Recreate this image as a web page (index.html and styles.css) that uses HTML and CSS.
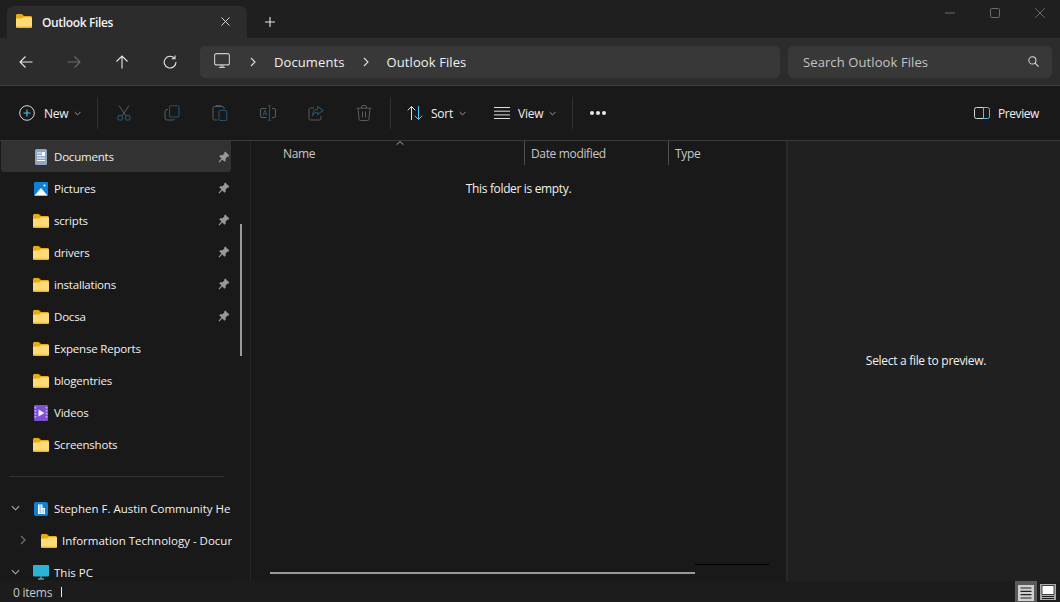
FILE: index.html
```html
<!DOCTYPE html>
<html lang="en">
<head>
<meta charset="utf-8">
<title>Outlook Files</title>
<link rel="stylesheet" href="styles.css">
</head>
<body>
<svg class="defs" width="0" height="0" aria-hidden="true">
  <defs>
    <symbol id="folder" viewBox="0 0 16 14">
      <path d="M0 1.5C0 .7.6 0 1.4 0h3.800c.5 0 .8.2 1.100.5L8 2h6.600c.8 0 1.400.7 1.400 1.500V5H0z" fill="#eba90f"/>
      <path d="M0 4.600h5.600L8 3.200h6.600c.8 0 1.400.6 1.400 1.400v8c0 .8-.6 1.400-1.400 1.400H1.400C.6 14 0 13.400 0 12.600z" fill="#ffdc78"/>
      <path d="M0 12.600h16c0 .8-.6 1.400-1.400 1.400H1.400C.6 14 0 13.400 0 12.600z" fill="#eeb533"/>
    </symbol>
    <symbol id="pin" viewBox="0 0 12 12">
      <path d="M7.300.6l4.100 4.100-1.100 1.100-.8-.2-1.900 1.900.1 2.100-1.100 1.100-2.300-2.300L1.300 11.500l-.8-.8 3-3.100L1.200 5.300l1.100-1.100 2.100.1L6.300 2.400l-.2-.7z" fill="#999"/>
    </symbol>
    <symbol id="chev" viewBox="0 0 10 6">
      <path d="M1 1l4 4 4-4" fill="none" stroke="currentColor" stroke-width="1.200"/>
    </symbol>
  </defs>
</svg>
<div class="window">
  <header class="titlebar">
    <div class="tab">
      <svg class="tab-folder"><use href="#folder"/></svg>
      <span class="tab-title">Outlook Files</span>
      <svg class="tab-close" viewBox="0 0 10 10"><path d="M.5.5l9 9M9.500.5l-9 9" stroke="#d8d8d8" stroke-width="1.100" fill="none"/></svg>
    </div>
    <svg class="tab-add" viewBox="0 0 10 10"><path d="M5 0v10M0 5h10" stroke="#e6e6e6" stroke-width="1.100" fill="none"/></svg>
    <div class="caption">
      <svg class="cap" viewBox="0 0 10 10"><path d="M0 5h10" stroke="#6b6b6b" fill="none"/></svg>
      <svg class="cap" viewBox="0 0 10 10"><rect x=".5" y=".5" width="9" height="9" rx="1" stroke="#6b6b6b" fill="none"/></svg>
      <svg class="cap" viewBox="0 0 10 10"><path d="M.3.3l9.400 9.400M9.700.3L.3 9.700" stroke="#6b6b6b" fill="none"/></svg>
    </div>
  </header>

  <nav class="navbar">
    <div class="nav-buttons">
      <svg class="nav-ico" viewBox="0 0 14 14"><path d="M13.500 7H1M6.500 1.500L1 7l5.500 5.500" stroke="#e8e8e8" stroke-width="1.100" fill="none"/></svg>
      <svg class="nav-ico" viewBox="0 0 14 14"><path d="M.5 7H13M7.500 1.500L13 7l-5.500 5.500" stroke="#6a6a6a" stroke-width="1.100" fill="none"/></svg>
      <svg class="nav-ico" viewBox="0 0 14 14"><path d="M7 13.500V1M1.500 6.500L7 1l5.500 5.500" stroke="#e8e8e8" stroke-width="1.100" fill="none"/></svg>
      <svg class="nav-ico" viewBox="0 0 14 14"><path d="M11.600 3.300A5.900 5.900 0 1 0 13 7" stroke="#e8e8e8" stroke-width="1.100" fill="none"/><path d="M12 .5v3.300H8.700" stroke="#e8e8e8" stroke-width="1.100" fill="none"/></svg>
    </div>
    <div class="address">
      <svg class="pc-ico" viewBox="0 0 16 16"><rect x=".6" y=".6" width="14.800" height="11.300" rx="2" stroke="#c9c9c9" stroke-width="1.100" fill="none"/><path d="M5 14.500h6M7 12v2M9 12v2" stroke="#c9c9c9" stroke-width="1.100" fill="none"/></svg>
      <svg class="crumb-sep" viewBox="0 0 6 10"><path d="M1 1l4 4-4 4" stroke="#dcdcdc" stroke-width="1.100" fill="none"/></svg>
      <span class="crumb">Documents</span>
      <svg class="crumb-sep" viewBox="0 0 6 10"><path d="M1 1l4 4-4 4" stroke="#dcdcdc" stroke-width="1.100" fill="none"/></svg>
      <span class="crumb">Outlook Files</span>
    </div>
    <div class="search">
      <span class="search-text">Search Outlook Files</span>
      <svg class="search-ico" viewBox="0 0 12 12"><circle cx="4.800" cy="4.800" r="3.900" stroke="#d8d8d8" stroke-width="1.100" fill="none"/><path d="M7.700 7.700l3.800 3.800" stroke="#d8d8d8" stroke-width="1.200" fill="none"/></svg>
    </div>
  </nav>

  <div class="toolbar">
    <div class="tool tool-new">
      <svg class="tool-ico" viewBox="0 0 16 16"><circle cx="8" cy="8" r="7.300" stroke="#d6d6d6" stroke-width="1" fill="none"/><path d="M8 4.500v7M4.500 8h7" stroke="#4cc2ff" stroke-width="1.100" fill="none"/></svg>
      <span class="tool-label">New</span>
      <svg class="tool-chev"><use href="#chev"/></svg>
    </div>
    <span class="tool-div tool-div-first"></span>
    <div class="tool-icons">
      <div class="icon-btn"><svg class="tool-ico" viewBox="0 0 16 16"><path d="M3 .5l6.600 10M13 .5L6.400 10.500" stroke="#5c5c5c" fill="none"/><circle cx="4.200" cy="12.800" r="2.400" stroke="#25506c" stroke-width="1.100" fill="none"/><circle cx="11.800" cy="12.800" r="2.400" stroke="#25506c" stroke-width="1.100" fill="none"/></svg></div>
      <div class="icon-btn"><svg class="tool-ico" viewBox="0 0 16 16"><path d="M4 4.500H3A2 2 0 0 0 1 6.500v6.500a2 2 0 0 0 2 2h6a2 2 0 0 0 1.800-1.200" stroke="#5c5c5c" fill="none"/><rect x="5.500" y=".8" width="9.500" height="11.200" rx="2" stroke="#25506c" stroke-width="1.100" fill="none"/></svg></div>
      <div class="icon-btn"><svg class="tool-ico" viewBox="0 0 16 16"><path d="M5.500 15H2.500a1.500 1.500 0 0 1-1.500-1.500V3a1.500 1.500 0 0 1 1.500-1.500h8A1.500 1.500 0 0 1 12 3v1.500M4 1.500V.7h5v.8" stroke="#5c5c5c" fill="none"/><rect x="7" y="5.500" width="7.800" height="10" rx="1.500" stroke="#25506c" stroke-width="1.100" fill="none"/></svg></div>
      <div class="icon-btn"><svg class="tool-ico" viewBox="0 0 16 16"><path d="M6.500 3.500H2A1.500 1.500 0 0 0 .5 5v6A1.500 1.500 0 0 0 2 12.500h4.500M12 3.500h2A1.500 1.500 0 0 1 15.500 5v6A1.500 1.500 0 0 1 14 12.500h-2" stroke="#5c5c5c" fill="none"/><path d="M3 10.500l2-5.500 2 5.500M3.700 8.800h2.600" stroke="#25506c" fill="none"/><path d="M9.500 1v14M7.800.8h3.400M7.800 15.200h3.400" stroke="#25506c" stroke-width="1.100" fill="none"/></svg></div>
      <div class="icon-btn"><svg class="tool-ico" viewBox="0 0 16 16"><path d="M6 3H2.500A1.500 1.500 0 0 0 1 4.500v9A1.500 1.500 0 0 0 2.500 15h9a1.500 1.500 0 0 0 1.500-1.500V11" stroke="#5c5c5c" fill="none"/><path d="M9.500 1.500l5.500 4-5.500 4.200V7.300C7 7.300 5.500 8.500 4.500 11c0-4 2-6.600 5-6.800z" stroke="#25506c" stroke-width="1.100" fill="none"/></svg></div>
      <div class="icon-btn"><svg class="tool-ico" viewBox="0 0 16 16"><path d="M.5 3.200h15M5.500 3V2a1.500 1.500 0 0 1 1.500-1.500h2A1.500 1.500 0 0 1 10.500 2v1M2 3.200l1 10.800a1.500 1.500 0 0 0 1.500 1.500h7a1.500 1.500 0 0 0 1.500-1.500l1-10.800M6.500 6.500v6M9.500 6.500v6" stroke="#5c5c5c" fill="none"/></svg></div>
    </div>
    <span class="tool-div"></span>
    <div class="tool tool-sort">
      <svg class="tool-ico sort-ico" viewBox="0 0 16 16"><path d="M4.500 15V1.500M.7 5.300L4.500 1.500l3.800 3.800" stroke="#e0e0e0" fill="none"/><path d="M11.500 1v13.500M7.700 10.700l3.800 3.800 3.800-3.800" stroke="#4cc2ff" fill="none"/></svg>
      <span class="tool-label">Sort</span>
      <svg class="tool-chev"><use href="#chev"/></svg>
    </div>
    <div class="tool tool-view">
      <svg class="tool-ico" viewBox="0 0 16 16"><path d="M0 2.500h16M0 6.200h16M0 9.900h16M0 13.500h16" stroke="#e0e0e0" fill="none"/></svg>
      <span class="tool-label">View</span>
      <svg class="tool-chev"><use href="#chev"/></svg>
    </div>
    <span class="tool-div"></span>
    <div class="dots"><i></i><i></i><i></i></div>
    <div class="tool tool-preview">
      <svg class="tool-ico" viewBox="0 0 16 12"><path d="M9.500.5H2.500a2 2 0 0 0-2 2v7a2 2 0 0 0 2 2h7" stroke="#d8d8d8" fill="none"/><path d="M9.500.5h4a2 2 0 0 1 2 2v7a2 2 0 0 1-2 2h-4z" stroke="#4cc2ff" fill="none"/></svg>
      <span class="tool-label">Preview</span>
    </div>
  </div>

  <main class="body">
    <aside class="sidebar">
      <ul class="tree">
        <li class="row row-active">
          <svg class="ico doc" viewBox="0 0 12 16"><rect width="12" height="16" rx="1.500" fill="#8fa6c2"/><path d="M2 4h4.500M2 6.500h4.500M2 9h8M2 11.500h8" stroke="#fff" stroke-width="1.200"/><rect x="7" y="3" width="3" height="4" fill="#fff"/></svg>
          <span class="label">Documents</span><svg class="pin"><use href="#pin"/></svg>
        </li>
        <li class="row">
          <svg class="ico" viewBox="0 0 16 14"><rect width="14" height="14" x="1" rx="1" fill="#0f80d7"/><path d="M1.500 13.500L8 6l6.500 7.500z" fill="#fff"/><circle cx="11.500" cy="3.500" r="1.100" fill="#fff"/></svg>
          <span class="label">Pictures</span><svg class="pin"><use href="#pin"/></svg>
        </li>
        <li class="row"><svg class="ico"><use href="#folder"/></svg><span class="label">scripts</span><svg class="pin"><use href="#pin"/></svg></li>
        <li class="row"><svg class="ico"><use href="#folder"/></svg><span class="label">drivers</span><svg class="pin"><use href="#pin"/></svg></li>
        <li class="row"><svg class="ico"><use href="#folder"/></svg><span class="label">installations</span><svg class="pin"><use href="#pin"/></svg></li>
        <li class="row"><svg class="ico"><use href="#folder"/></svg><span class="label">Docsa</span><svg class="pin"><use href="#pin"/></svg></li>
        <li class="row"><svg class="ico"><use href="#folder"/></svg><span class="label">Expense Reports</span></li>
        <li class="row"><svg class="ico"><use href="#folder"/></svg><span class="label">blogentries</span></li>
        <li class="row">
          <svg class="ico ico-tall" viewBox="0 0 16 16"><rect x="1" width="14" height="16" rx="1" fill="#7d4fd3"/><path d="M2.500 2v12M13.500 2v12" stroke="#c9b3f0" stroke-width="1.600" stroke-dasharray="1.500 1.500"/><path d="M5.500 4.500l6 3.500-6 3.500z" fill="#f2ecff"/></svg>
          <span class="label">Videos</span>
        </li>
        <li class="row"><svg class="ico"><use href="#folder"/></svg><span class="label">Screenshots</span></li>
      </ul>
      <hr class="tree-div">
      <ul class="tree">
        <li class="row row-expand">
          <svg class="twist"><use href="#chev"/></svg>
          <svg class="ico" viewBox="0 0 16 14"><rect x="1" width="14" height="14" rx="2" fill="#0f80d7"/><path d="M5 12V2.500h4.500V6H12v6z" fill="#fff"/><path d="M6.300 4h2M6.300 6h2M6.300 8h2M6.300 10h2M9.500 8H11M9.500 10H11" stroke="#0f80d7" stroke-width=".8"/></svg>
          <span class="label">Stephen F. Austin Community He</span>
        </li>
        <li class="row row-child">
          <svg class="twist twist-closed" viewBox="0 0 6 10"><path d="M1 1l4 4-4 4" stroke="#707070" stroke-width="1.300" fill="none"/></svg>
          <svg class="ico"><use href="#folder"/></svg>
          <span class="label">Information Technology - Docur</span>
        </li>
        <li class="row row-expand">
          <svg class="twist"><use href="#chev"/></svg>
          <svg class="ico ico-tall" viewBox="0 0 16 16"><rect width="16" height="11.500" rx="1" fill="#2ab3d6"/><path d="M5 14h6M8 11.500V14" stroke="#7f8f9a" stroke-width="1.500"/></svg>
          <span class="label">This PC</span>
        </li>
      </ul>
    </aside>
    <div class="side-gutter"></div>

    <section class="files">
      <div class="columns">
        <span class="col col-name">Name</span>
        <span class="col col-date">Date modified</span>
        <span class="col col-type">Type</span>
      </div>
      <svg class="sort-caret" viewBox="0 0 8 4"><path d="M.5 3.700L4 .5l3.500 3.200" stroke="#a8a8a8" fill="none"/></svg>
      <p class="empty">This folder is empty.</p>
      <span class="h-track"></span>
      <span class="h-thumb"></span>
    </section>

    <section class="preview"><p class="preview-text">Select a file to preview.</p></section>
    <span class="side-thumb"></span>
  </main>

  <footer class="status">
    <span class="count">0 items</span>
    <span class="caret"></span>
    <div class="views">
      <span class="view view-on"><svg viewBox="0 0 16 16"><rect width="16" height="16" fill="#d0d0d0"/><path d="M2.500 3h11M2.500 6.300h11M2.500 9.600h11M2.500 13h11" stroke="#202020" stroke-width="1.200"/></svg></span>
      <span class="view"><svg viewBox="0 0 16 16"><rect width="16" height="16" fill="#a8a8a8"/><rect x="2" y="1.500" width="12" height="9" fill="#fff" stroke="#202020" stroke-width=".8"/><path d="M2 12.500h12M2 14.500h12" stroke="#202020"/></svg></span>
    </div>
  </footer>
</div>
</body>
</html>
```

FILE: styles.css
```css
* { box-sizing: border-box; }
html, body { margin: 0; padding: 0; }
body {
  width: 1060px;
  height: 602px;
  overflow: hidden;
  background: #1c1c1c;
  color: #fff;
  font-family: "Open Sans", "Noto Sans", "Liberation Sans", sans-serif;
  font-size: 12px;
}
.defs { position: absolute; }
svg { display: block; flex: none; overflow: visible; }
ul { list-style: none; margin: 0; padding: 0; }
p { margin: 0; }

.window { display: flex; flex-direction: column; height: 602px; }

/* title bar */
.titlebar { height: 38px; flex: none; display: flex; align-items: flex-end; background: #1f1f1f; padding-left: 7px; }
.tab { width: 240px; height: 32px; display: flex; align-items: center; padding: 0 17px 0 9px; background: #2c2c2c; border-radius: 7px 7px 0 0; }
.tab-folder { width: 16px; height: 14px; margin-top: -2px; }
.tab-title { margin-left: 10px; font-size: 12px; font-weight: 600; color: #f3f3f3; letter-spacing: -.35px; flex: 1; }
.tab-close { width: 9px; height: 9px; margin-top: -1px; }
.tab-add { width: 10px; height: 10px; margin: 0 0 11px 18px; }
.caption { margin-left: auto; align-self: flex-start; display: flex; gap: 35px; padding: 8px 15px 0 0; }
.cap { width: 10px; height: 10px; }

/* navigation */
.navbar { height: 48px; flex: none; display: flex; align-items: center; gap: 8px; padding: 0 8px 0 0; background: #2c2c2c; border-bottom: 1px solid #3d3d3d; }
.nav-buttons { display: flex; gap: 34px; width: 192px; padding-left: 19px; }
.nav-ico { width: 14px; height: 14px; }
.address { width: 580px; height: 32px; display: flex; align-items: center; background: #383838; border-radius: 5px; padding-left: 14px; }
.pc-ico { width: 16px; height: 16px; margin-top: -2px; }
.crumb-sep { width: 6px; height: 10px; margin: 0 18px 0 20px; }
.crumb + .crumb-sep { margin: 0 18px; }
.crumb { font-size: 13px; color: #f0f0f0; letter-spacing: .1px; }
.search { width: 264px; height: 32px; display: flex; align-items: center; justify-content: space-between; background: #383838; border-radius: 5px; padding: 0 13px 0 15px; }
.search-text { font-size: 13px; color: #c4c4c4; letter-spacing: .1px; }
.search-ico { width: 11px; height: 11px; }

/* toolbar */
.toolbar { height: 55px; flex: none; display: flex; align-items: center; background: #191919; border-bottom: 1px solid #3a3a3a; padding-left: 19px; }
.tool { display: flex; align-items: center; }
.tool-ico { width: 16px; height: 16px; }
.tool-label { color: #f0f0f0; margin-left: 9px; letter-spacing: -.25px; }
.tool-chev { width: 7px; height: 5px; color: #b5b5b5; margin-left: 6px; }
.tool-new { width: 78px; }
.tool-div { width: 1px; height: 32px; background: #303030; flex: none; }
.tool-div-first { margin-right: 2px; }
.tool-icons { display: flex; margin-right: 2px; }
.icon-btn { width: 48px; display: flex; justify-content: center; }
.tool-sort { margin-left: 16px; width: 87px; }
.tool-view { width: 78px; }
.tool-sort .tool-label, .tool-view .tool-label, .tool-preview .tool-label { margin-left: 8px; }
.dots { display: flex; gap: 2px; margin-left: 17px; }
.dots i { width: 4px; height: 4px; border-radius: 50%; background: #e8e8e8; }
.tool-preview { margin-left: auto; padding-right: 21px; }
.tool-preview .tool-ico { height: 12px; }
.tool-preview .tool-label { letter-spacing: -.4px; }

/* body */
.body { flex: 1; min-height: 0; position: relative; display: flex; overflow: hidden; background: #191919; }
.sidebar { width: 232px; flex: none; overflow: hidden; }
.row { height: 32px; display: flex; align-items: center; padding-left: 33px; white-space: nowrap; overflow: hidden; color: #f0f0f0; }
.row-active { background: #323232; height: 31px; margin: 0 1px; padding-left: 32px; border-radius: 0 0 3px 3px; }
.row-active .label { padding-top: 0; }
.row-active .pin { margin-right: 1px; }
.ico { width: 16px; height: 14px; margin-top: 1px; }
.ico-tall { height: 16px; }
.doc { height: 16px; width: 12px; margin: 1px 2px 0; }
.label { margin-left: 5px; padding-top: 1px; font-size: 11.5px; letter-spacing: -.2px; flex: 1; }
.pin { width: 12px; height: 12px; margin-right: 2px; }
.tree-div { height: 1px; border: 0; background: #333; margin: 16px 8px 15px 9px; }
.row-expand { padding-left: 11px; }
.row-expand .label, .row-child .label { letter-spacing: 0; }
.twist { width: 9px; height: 6px; margin-right: 13px; color: #b0b0b0; }
.row-child { padding-left: 20px; }
.twist-closed { width: 6px; height: 10px; margin-right: 15px; }

.side-gutter { width: 19px; flex: none; background: #1a1a1a; border-right: 1px solid #262626; }
.side-thumb { position: absolute; left: 240px; top: 83px; width: 2px; height: 132px; background: #9a9a9a; }

.files { width: 535px; flex: none; position: relative; background: #191919; }
.columns { height: 24px; display: flex; color: #c8c8c8; letter-spacing: -.35px; }
.col { display: flex; align-items: center; padding: 1px 0 0 6px; }
.col-name { width: 273px; padding-left: 32px; }
.col-date { width: 144px; border-left: 1px solid #4f4f4f; }
.col-type { flex: 1; border-left: 1px solid #4f4f4f; }
.sort-caret { position: absolute; left: 145px; top: 0; width: 8px; height: 4px; }
.empty { text-align: center; margin-top: 15px; color: #f0f0f0; letter-spacing: -.35px; }
.h-thumb { position: absolute; left: 19px; top: 431px; width: 425px; height: 2px; background: #9a9a9a; }
.h-track { position: absolute; left: 444px; top: 423px; width: 74px; height: 1px; background: #000; }

.preview { flex: 1; display: flex; align-items: center; justify-content: center; background: #202020; border-left: 2px solid #2a2a2a; padding-left: 4px; }
.preview-text { color: #f0f0f0; letter-spacing: -.3px; margin: 0 0 1px; }

/* status */
.status { height: 21px; flex: none; display: flex; align-items: center; background: #1c1c1c; padding-left: 13px; }
.count { color: #c8c8c8; letter-spacing: -.25px; padding-top: 1px; }
.caret { width: 1px; height: 10px; background: #e8e8e8; margin-left: 9px; }
.views { margin-left: auto; display: flex; align-items: center; gap: 3px; padding-right: 4px; height: 21px; }
.view { display: flex; width: 16px; height: 16px; }
.view svg { width: 16px; height: 16px; }
.view-on { width: 22px; height: 21px; background: #5a5a5a; padding: 4px 3px 1px; }
```
